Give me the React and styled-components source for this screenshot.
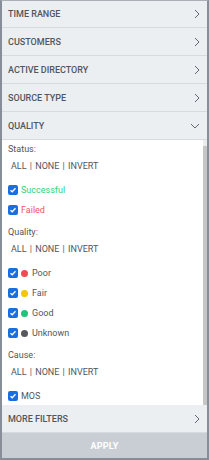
import React from "react";
import styled, { createGlobalStyle } from "styled-components";

const Global = createGlobalStyle`
  html, body { margin: 0; padding: 0; background: #fff; }
  body { font-family: Roboto, "Liberation Sans", Arial, sans-serif; }
  * { box-sizing: border-box; }
`;

const Frame = styled.div`
  width: 209px;
  height: 460px;
  border: 2px solid #878e97;
  border-top: 1px solid #a9afb6;
  display: flex;
  flex-direction: column;
  background: #eceff2;
  overflow: hidden;
`;

const Header = styled.div`
  height: ${p => (p.$first ? 27 : 28)}px;
  flex: none;
  display: flex;
  align-items: center;
  justify-content: space-between;
  padding: 0 7px 0 6px;
  background: #eceff2;
  border-bottom: 1px solid #d6dbe0;
  color: #50565d;
  font-size: 9px;
  font-weight: 500;
  text-transform: uppercase;
`;

const Body = styled.div`
  height: 265px;
  flex: none;
  display: flex;
  background: #fff;
`;

const Content = styled.div`
  flex: 1;
  overflow: hidden;
  padding: 1px 0 0 6px;
`;

const Track = styled.div`
  width: 4px;
  flex: none;
  background: #ececec;
  padding-top: 6px;
  display: flex;
`;

const Thumb = styled.div`
  flex: 1;
  background: #c6c6c6;
`;

const Group = styled.div`
  margin-bottom: 4px;
`;

const Label = styled.div`
  height: 17px;
  line-height: 17px;
  font-size: 9px;
  color: #50565d;
`;

const Links = styled.div`
  height: 17px;
  line-height: 17px;
  font-size: 9px;
  color: #50565d;
  padding-left: 3px;
  margin-bottom: 5px;
  word-spacing: 1px;
`;

const Row = styled.label`
  height: 20px;
  display: flex;
  align-items: center;
  gap: 3px;
  font-size: 9px;
  color: ${p => p.$color || "#50565d"};
`;

const Box = styled.span`
  width: 10px;
  height: 10px;
  border-radius: 2px;
  background: #1a6fe0;
  display: flex;
  align-items: center;
  justify-content: center;
  flex: none;
`;

const Dot = styled.span`
  width: 7px;
  height: 7px;
  border-radius: 50%;
  background: ${p => p.$color};
  margin-right: 1px;
  flex: none;
`;

const Apply = styled.div`
  flex: 1;
  background: #c9ced4;
  color: #fff;
  font-size: 9px;
  font-weight: 700;
  display: flex;
  align-items: center;
  justify-content: center;
  letter-spacing: 0.2px;
`;

const Right = () => (
  <svg width="6" height="10" viewBox="0 0 6 10">
    <polyline points="1,1 5,5 1,9" fill="none" stroke="#62686f" strokeWidth="1" />
  </svg>
);

const Down = () => (
  <svg width="10" height="6" viewBox="0 0 10 6">
    <polyline points="1,1 5,5 9,1" fill="none" stroke="#62686f" strokeWidth="1" />
  </svg>
);

const Check = () => (
  <svg width="8" height="8" viewBox="0 0 8 8">
    <polyline points="1.5,4.2 3.2,5.8 6.5,2.2" fill="none" stroke="#fff" strokeWidth="1.3" />
  </svg>
);

const Item = ({ color, dot, children }) => (
  <Row $color={color}>
    <Box><Check /></Box>
    {dot && <Dot $color={dot} />}
    {children}
  </Row>
);

const LinkRow = () => <Links>ALL | NONE | INVERT</Links>;

export default function App() {
  return (
    <>
      <Global />
      <Frame>
        {["Time Range", "Customers", "Active Directory", "Source Type"].map((t, i) => (
          <Header key={t} $first={i === 0}>{t}<Right /></Header>
        ))}
        <Header>Quality<Down /></Header>
        <Body>
          <Content>
            <Group>
              <Label>Status:</Label>
              <LinkRow />
              <Item color="#35cf78">Successful</Item>
              <Item color="#f2545b">Failed</Item>
            </Group>
            <Group>
              <Label>Quality:</Label>
              <LinkRow />
              <Item dot="#ef4d52">Poor</Item>
              <Item dot="#f4c500">Fair</Item>
              <Item dot="#1fc47a">Good</Item>
              <Item dot="#55595e">Unknown</Item>
            </Group>
            <Group>
              <Label>Cause:</Label>
              <LinkRow />
              <Item>MOS</Item>
            </Group>
          </Content>
          <Track><Thumb /></Track>
        </Body>
        <Header>More Filters<Right /></Header>
        <Apply>APPLY</Apply>
      </Frame>
    </>
  );
}
